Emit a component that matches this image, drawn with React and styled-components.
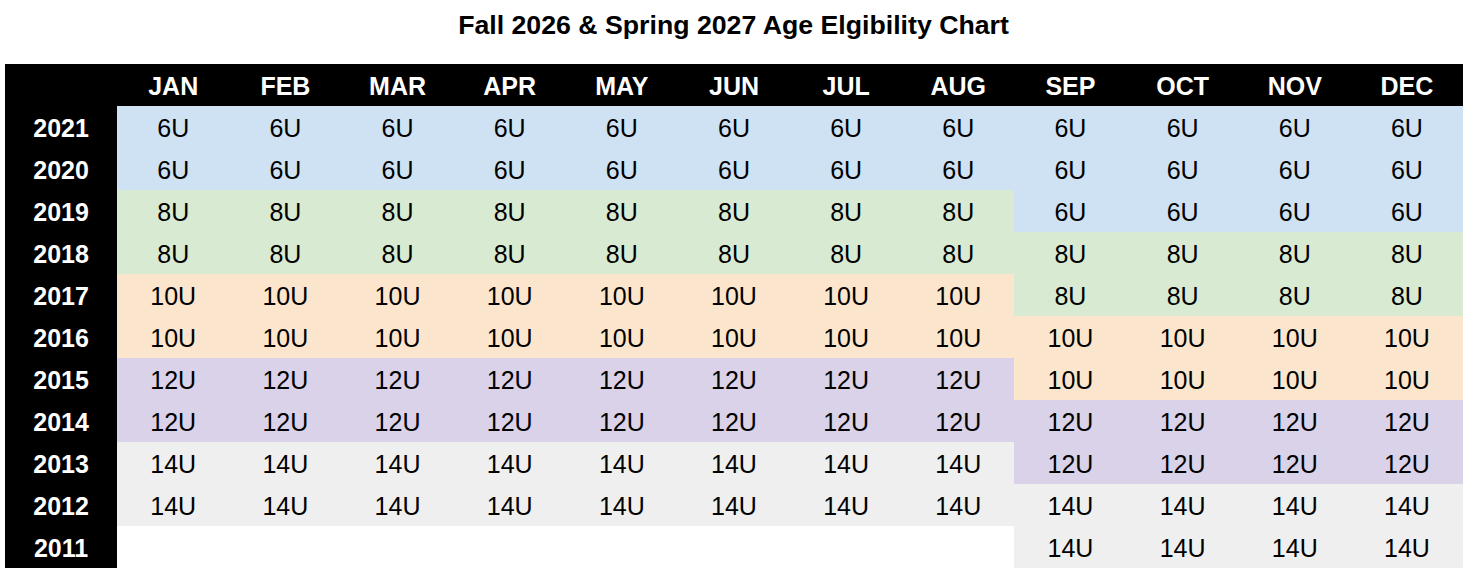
import React from "react";
import styled, { createGlobalStyle } from "styled-components";

const Global = createGlobalStyle`
  html, body { margin: 0; padding: 0; background: #ffffff; }
  body { font-family: "Liberation Sans", Arial, sans-serif; }
`;

const Page = styled.div`
  width: 1467px;
  display: flex;
  flex-direction: column;
  align-items: center;
`;

const Title = styled.h1`
  margin: 0;
  height: 50px;
  display: flex;
  align-items: center;
  justify-content: center;
  font-size: 26.7px;
  font-weight: 700;
  color: #000;
`;

const Chart = styled.div`
  margin-top: 14px;
  margin-left: 5px;
  align-self: flex-start;
  width: 1458px;
  display: grid;
  grid-template-columns: repeat(13, 1fr);
  grid-auto-rows: 42px;
`;

const HeadCell = styled.div`
  background: #000;
  color: #fff;
  font-weight: 700;
  font-size: 25px;
  padding-top: 2px;
  box-sizing: border-box;
  display: flex;
  align-items: center;
  justify-content: center;
`;

const palette = {
  "6U": "#cfe2f3",
  "8U": "#d9ead3",
  "10U": "#fce5cd",
  "12U": "#d9d2e9",
  "14U": "#efefef",
  "": "#ffffff",
};

const Cell = styled.div`
  background: ${(p) => palette[p.$group]};
  color: #000;
  font-size: 25px;
  padding-top: 2px;
  box-sizing: border-box;
  display: flex;
  align-items: center;
  justify-content: center;
`;

const months = ["JAN", "FEB", "MAR", "APR", "MAY", "JUN", "JUL", "AUG", "SEP", "OCT", "NOV", "DEC"];
const years = [2021, 2020, 2019, 2018, 2017, 2016, 2015, 2014, 2013, 2012, 2011];
const early = ["6U", "6U", "8U", "8U", "10U", "10U", "12U", "12U", "14U", "14U", ""];
const late = ["6U", "6U", "6U", "8U", "8U", "10U", "10U", "12U", "12U", "14U", "14U"];

export default function App() {
  return (
    <>
      <Global />
      <Page>
        <Title>Fall 2026 &amp; Spring 2027 Age Elgibility Chart</Title>
        <Chart>
          <HeadCell />
          {months.map((m) => (
            <HeadCell key={m}>{m}</HeadCell>
          ))}
          {years.map((y, r) => (
            <React.Fragment key={y}>
              <HeadCell>{y}</HeadCell>
              {months.map((m, c) => {
                const g = c < 8 ? early[r] : late[r];
                return (
                  <Cell key={m} $group={g}>
                    {g}
                  </Cell>
                );
              })}
            </React.Fragment>
          ))}
        </Chart>
      </Page>
    </>
  );
}
